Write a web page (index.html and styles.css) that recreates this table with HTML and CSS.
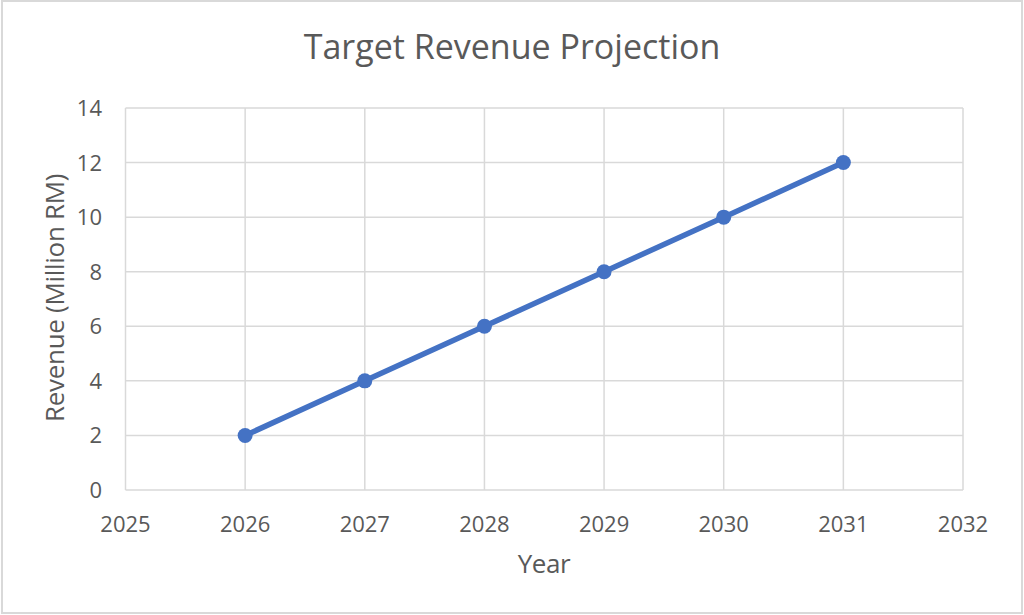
FILE: index.html
```html
<!DOCTYPE html>
<html lang="en">
<head>
<meta charset="utf-8">
<title>Target Revenue Projection</title>
<link rel="stylesheet" href="styles.css">
</head>
<body>
<div class="chart">
  <div class="title">Target Revenue Projection</div>
  <div class="body">
    <div class="ytitle-wrap"><div class="ytitle">Revenue (Million RM)</div></div>
    <div class="plotcol">
      <svg class="plot" width="954" height="482" viewBox="0 0 954 482" xmlns="http://www.w3.org/2000/svg">
        <g class="grid">
          <line x1="58.5" y1="45" x2="896" y2="45"/>
          <line x1="58.5" y1="99.57" x2="896" y2="99.57"/>
          <line x1="58.5" y1="154.14" x2="896" y2="154.14"/>
          <line x1="58.5" y1="208.71" x2="896" y2="208.71"/>
          <line x1="58.5" y1="263.29" x2="896" y2="263.29"/>
          <line x1="58.5" y1="317.86" x2="896" y2="317.86"/>
          <line x1="58.5" y1="372.43" x2="896" y2="372.43"/>
          <line x1="58.5" y1="427" x2="896" y2="427"/>
          <line x1="58.5" y1="45" x2="58.5" y2="427"/>
          <line x1="178.14" y1="45" x2="178.14" y2="427"/>
          <line x1="297.79" y1="45" x2="297.79" y2="427"/>
          <line x1="417.43" y1="45" x2="417.43" y2="427"/>
          <line x1="537.07" y1="45" x2="537.07" y2="427"/>
          <line x1="656.71" y1="45" x2="656.71" y2="427"/>
          <line x1="776.36" y1="45" x2="776.36" y2="427"/>
          <line x1="896" y1="45" x2="896" y2="427"/>
        </g>
        <g class="yticks">
          <text x="35" y="53">14</text>
          <text x="35" y="107.57">12</text>
          <text x="35" y="162.14">10</text>
          <text x="35" y="216.71">8</text>
          <text x="35" y="271.29">6</text>
          <text x="35" y="325.86">4</text>
          <text x="35" y="380.43">2</text>
          <text x="35" y="435">0</text>
        </g>
        <g class="xticks">
          <text x="58.5" y="469">2025</text>
          <text x="178.14" y="469">2026</text>
          <text x="297.79" y="469">2027</text>
          <text x="417.43" y="469">2028</text>
          <text x="537.07" y="469">2029</text>
          <text x="656.71" y="469">2030</text>
          <text x="776.36" y="469">2031</text>
          <text x="896" y="469">2032</text>
        </g>
        <polyline class="series" points="178.14,372.43 297.79,317.86 417.43,263.29 537.07,208.71 656.71,154.14 776.36,99.57"/>
        <g class="markers">
          <circle cx="178.14" cy="372.43" r="7.5"/>
          <circle cx="297.79" cy="317.86" r="7.5"/>
          <circle cx="417.43" cy="263.29" r="7.5"/>
          <circle cx="537.07" cy="208.71" r="7.5"/>
          <circle cx="656.71" cy="154.14" r="7.5"/>
          <circle cx="776.36" cy="99.57" r="7.5"/>
        </g>
      </svg>
      <div class="xtitle">Year</div>
    </div>
  </div>
</div>
</body>
</html>
```
FILE: styles.css
```css
html, body {
  margin: 0;
  padding: 0;
  background: #ffffff;
}
body {
  font-family: "Open Sans", "Liberation Sans", sans-serif;
  color: #595959;
}
.chart {
  box-sizing: border-box;
  width: 1022px;
  height: 614px;
  margin-left: 1px;
  border: 2px solid #d9d9d9;
  display: flex;
  flex-direction: column;
  overflow: hidden;
}
.title {
  padding-top: 27px;
  height: 34px;
  font-size: 34px;
  line-height: 34px;
  text-align: center;
  letter-spacing: 0;
}
.body {
  display: flex;
  flex-direction: row;
}
.ytitle-wrap {
  width: 64px;
  display: flex;
  justify-content: flex-end;
  align-items: flex-start;
}
.ytitle {
  margin-top: 35px;
  height: 400px;
  width: 26px;
  font-size: 26px;
  line-height: 26px;
  writing-mode: vertical-rl;
  transform: rotate(180deg);
  text-align: center;
  white-space: nowrap;
  letter-spacing: -0.3px;
}
.plotcol {
  width: 954px;
  display: flex;
  flex-direction: column;
}
.plot {
  display: block;
}
.grid line {
  stroke: #d9d9d9;
  stroke-width: 1.5;
}
.yticks text, .xticks text {
  font-family: "Open Sans", "Liberation Sans", sans-serif;
  font-size: 22px;
  fill: #595959;
}
.yticks text {
  text-anchor: end;
}
.xticks text {
  text-anchor: middle;
}
.series {
  fill: none;
  stroke: #4472c4;
  stroke-width: 5.5;
  stroke-linecap: round;
  stroke-linejoin: round;
}
.markers circle {
  fill: #4472c4;
}
.xtitle {
  margin-top: 5px;
  font-size: 26px;
  line-height: 26px;
  height: 26px;
  text-align: center;
  letter-spacing: -0.4px;
}
```
